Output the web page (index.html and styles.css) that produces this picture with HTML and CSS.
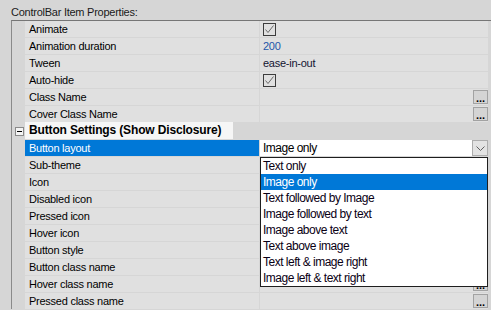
FILE: index.html
```html
<!DOCTYPE html>
<html lang="en">
<head>
  <meta charset="UTF-8">
  <title>ControlBar Item Properties</title>
  <link rel="stylesheet" href="styles.css">
</head>
<body>
  <div class="panel">
    <div class="caption">ControlBar Item Properties:</div>

    <div class="grid">
      <div class="row">
        <span class="gutter"></span>
        <span class="name">Animate</span>
        <span class="value"><span class="check"><svg width="11" height="11" viewBox="0 0 11 11"><polyline points="1.5,5.5 4,8.5 9.5,1.5" fill="none" stroke="#6a6a6a" stroke-width="1"/></svg></span></span>
      </div>
      <div class="row">
        <span class="gutter"></span>
        <span class="name">Animation duration</span>
        <span class="value changed">200</span>
      </div>
      <div class="row">
        <span class="gutter"></span>
        <span class="name">Tween</span>
        <span class="value">ease-in-out</span>
      </div>
      <div class="row">
        <span class="gutter"></span>
        <span class="name">Auto-hide</span>
        <span class="value"><span class="check"><svg width="11" height="11" viewBox="0 0 11 11"><polyline points="1.5,5.5 4,8.5 9.5,1.5" fill="none" stroke="#6a6a6a" stroke-width="1"/></svg></span></span>
      </div>
      <div class="row">
        <span class="gutter"></span>
        <span class="name">Class Name</span>
        <span class="value"><span class="ellipsis">...</span></span>
      </div>
      <div class="row">
        <span class="gutter"></span>
        <span class="name">Cover Class Name</span>
        <span class="value"><span class="ellipsis">...</span></span>
      </div>

      <div class="row category">
        <span class="gutter"><span class="toggle"></span></span>
        <span class="cat-label">Button Settings (Show Disclosure)</span>
      </div>

      <div class="row">
        <span class="gutter"></span>
        <span class="name selected">Button layout</span>
        <span class="value editing">
          Image only
          <span class="drop-btn"><svg width="9" height="5" viewBox="0 0 9 5"><polyline points="0.5,0.5 4.5,4.5 8.5,0.5" fill="none" stroke="#606060" stroke-width="1"/></svg></span>
          <ul class="dropdown">
            <li>Text only</li>
            <li class="active">Image only</li>
            <li>Text followed by Image</li>
            <li>Image followed by text</li>
            <li>Image above text</li>
            <li>Text above image</li>
            <li>Text left &amp; image right</li>
            <li>Image left &amp; text right</li>
          </ul>
        </span>
      </div>
      <div class="row">
        <span class="gutter"></span>
        <span class="name">Sub-theme</span>
        <span class="value"></span>
      </div>
      <div class="row">
        <span class="gutter"></span>
        <span class="name">Icon</span>
        <span class="value"></span>
      </div>
      <div class="row">
        <span class="gutter"></span>
        <span class="name">Disabled icon</span>
        <span class="value"></span>
      </div>
      <div class="row">
        <span class="gutter"></span>
        <span class="name">Pressed icon</span>
        <span class="value"></span>
      </div>
      <div class="row">
        <span class="gutter"></span>
        <span class="name">Hover icon</span>
        <span class="value"></span>
      </div>
      <div class="row">
        <span class="gutter"></span>
        <span class="name">Button style</span>
        <span class="value"></span>
      </div>
      <div class="row">
        <span class="gutter"></span>
        <span class="name">Button class name</span>
        <span class="value"><span class="ellipsis">...</span></span>
      </div>
      <div class="row">
        <span class="gutter"></span>
        <span class="name">Hover class name</span>
        <span class="value"><span class="ellipsis">...</span></span>
      </div>
      <div class="row">
        <span class="gutter"></span>
        <span class="name">Pressed class name</span>
        <span class="value"><span class="ellipsis">...</span></span>
      </div>
    </div>
  </div>
</body>
</html>
```

FILE: styles.css
```css
/* Base */
* {
  margin: 0;
  padding: 0;
  box-sizing: border-box;
}
body {
  font-family: 'Liberation Sans', Arial, sans-serif;
  font-size: 11px;
  letter-spacing: -0.25px;
  color: #000;
  background: #d6d6d6;
  overflow: hidden;
}
.panel {
  width: 491px;
  height: 310px;
}
.caption {
  height: 20px;
  padding: 5px 0 0 11px;
  line-height: 15px;
  color: #1a1a1a;
}
/* Property grid */
.grid {
  margin-left: 11px;
  border-left: 1px solid #8a8a8a;
  border-top: 1px solid #767676;
  padding-right: 3px;
  display: flex;
  flex-direction: column;
  gap: 1px;
}
.row {
  display: flex;
  height: 16px;
  line-height: 16px;
}
.gutter {
  width: 13px;
  flex: none;
  position: relative;
}
.name {
  width: 234px;
  flex: none;
  background: #e0e0e0;
  padding-left: 4px;
  margin-right: 1px;
  white-space: nowrap;
}
.name.selected {
  background: #0078d7;
  color: #fff;
}
.value {
  flex: 1;
  background: #e0e0e0;
  padding-left: 3px;
  position: relative;
  white-space: nowrap;
  color: #141432;
}
.value.changed {
  color: #1d56a8;
}
.check {
  display: inline-block;
  width: 13px;
  height: 13px;
  margin-top: 2px;
  border: 1px solid #3c3c3c;
  vertical-align: top;
}
.check svg {
  display: block;
}
.ellipsis {
  position: absolute;
  right: 0;
  top: 1px;
  width: 15px;
  height: 14px;
  background: #d4d4d4;
  border: 1px solid #a2a2a2;
  font-weight: bold;
  font-size: 11px;
  line-height: 14px;
  text-align: center;
  letter-spacing: 0;
  color: #000;
}
/* Category row */
.category .toggle {
  position: absolute;
  left: 3px;
  top: 4px;
  width: 9px;
  height: 9px;
  border: 1px solid #8a8a8a;
  background: #f4f4f4;
}
.category .toggle::after {
  content: '';
  position: absolute;
  left: 1px;
  top: 3px;
  width: 5px;
  height: 1px;
  background: #000;
}
.cat-label {
  width: 208px;
  background: #f6f6f6;
  padding-left: 4px;
  font-weight: bold;
  font-size: 12px;
  letter-spacing: -0.15px;
  margin-top: -1px;
  height: 17px;
  line-height: 17px;
  white-space: nowrap;
}
/* Editing cell with drop-down */
.value.editing {
  background: #fff;
  font-size: 12px;
  letter-spacing: -0.5px;
  color: #000;
}
.drop-btn {
  position: absolute;
  right: 0;
  top: 0;
  width: 16px;
  height: 16px;
  background: #e3e3e3;
  border: 1px solid #adadad;
  display: flex;
  align-items: center;
  justify-content: center;
}
.dropdown {
  position: absolute;
  left: 0;
  right: 0;
  top: 17px;
  list-style: none;
  background: #fff;
  border: 1px solid #1e1e1e;
  z-index: 2;
}
.dropdown li {
  height: 16px;
  line-height: 16px;
  padding-left: 2px;
  color: #0a0014;
}
.dropdown li.active {
  background: #0078d7;
  color: #fff;
}
```
